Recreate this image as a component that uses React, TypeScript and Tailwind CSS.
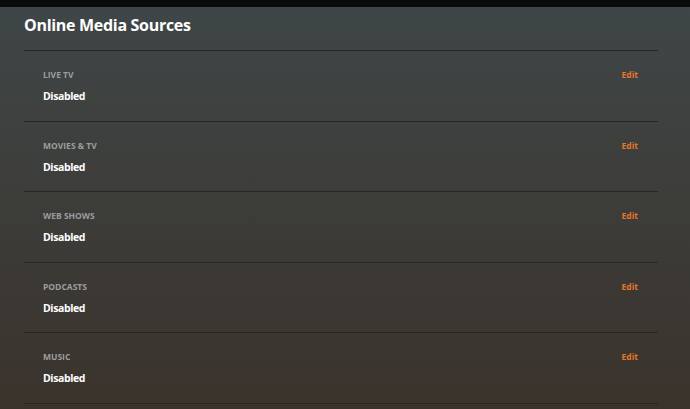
const sources = ["LIVE TV", "MOVIES & TV", "WEB SHOWS", "PODCASTS", "MUSIC"];

export default function App() {
  return (
    <div className="flex h-[409px] w-[690px] flex-col overflow-hidden bg-[#0a0a0a] font-['Open_Sans',sans-serif]">
      <div className="h-[7px] shrink-0" />
      <div className="flex-1 bg-gradient-to-b from-[#3f4647] to-[#3a332c] px-[24px]">
        <h1 className="pt-[7px] text-[16px] font-bold leading-[23px] tracking-[-0.3px] text-white">
          Online Media Sources
        </h1>
        <div className="mt-[13px] w-[634px]">
          {sources.map((name) => (
            <div
              key={name}
              className="flex h-[70.6px] justify-between border-t border-[#262626] pl-[19px] pr-[20px] pt-[18px]"
            >
              <div className="flex flex-col">
                <span className="text-[8.5px] font-bold uppercase leading-[12px] text-[#9a9d9e]">
                  {name}
                </span>
                <span className="mt-[8px] text-[10.5px] font-bold leading-[14px] tracking-[-0.4px] text-white">
                  Disabled
                </span>
              </div>
              <span className="text-[8.5px] font-bold leading-[12px] text-[#e5762a]">
                Edit
              </span>
            </div>
          ))}
          <div className="border-t border-[#262626]" />
        </div>
      </div>
    </div>
  );
}
